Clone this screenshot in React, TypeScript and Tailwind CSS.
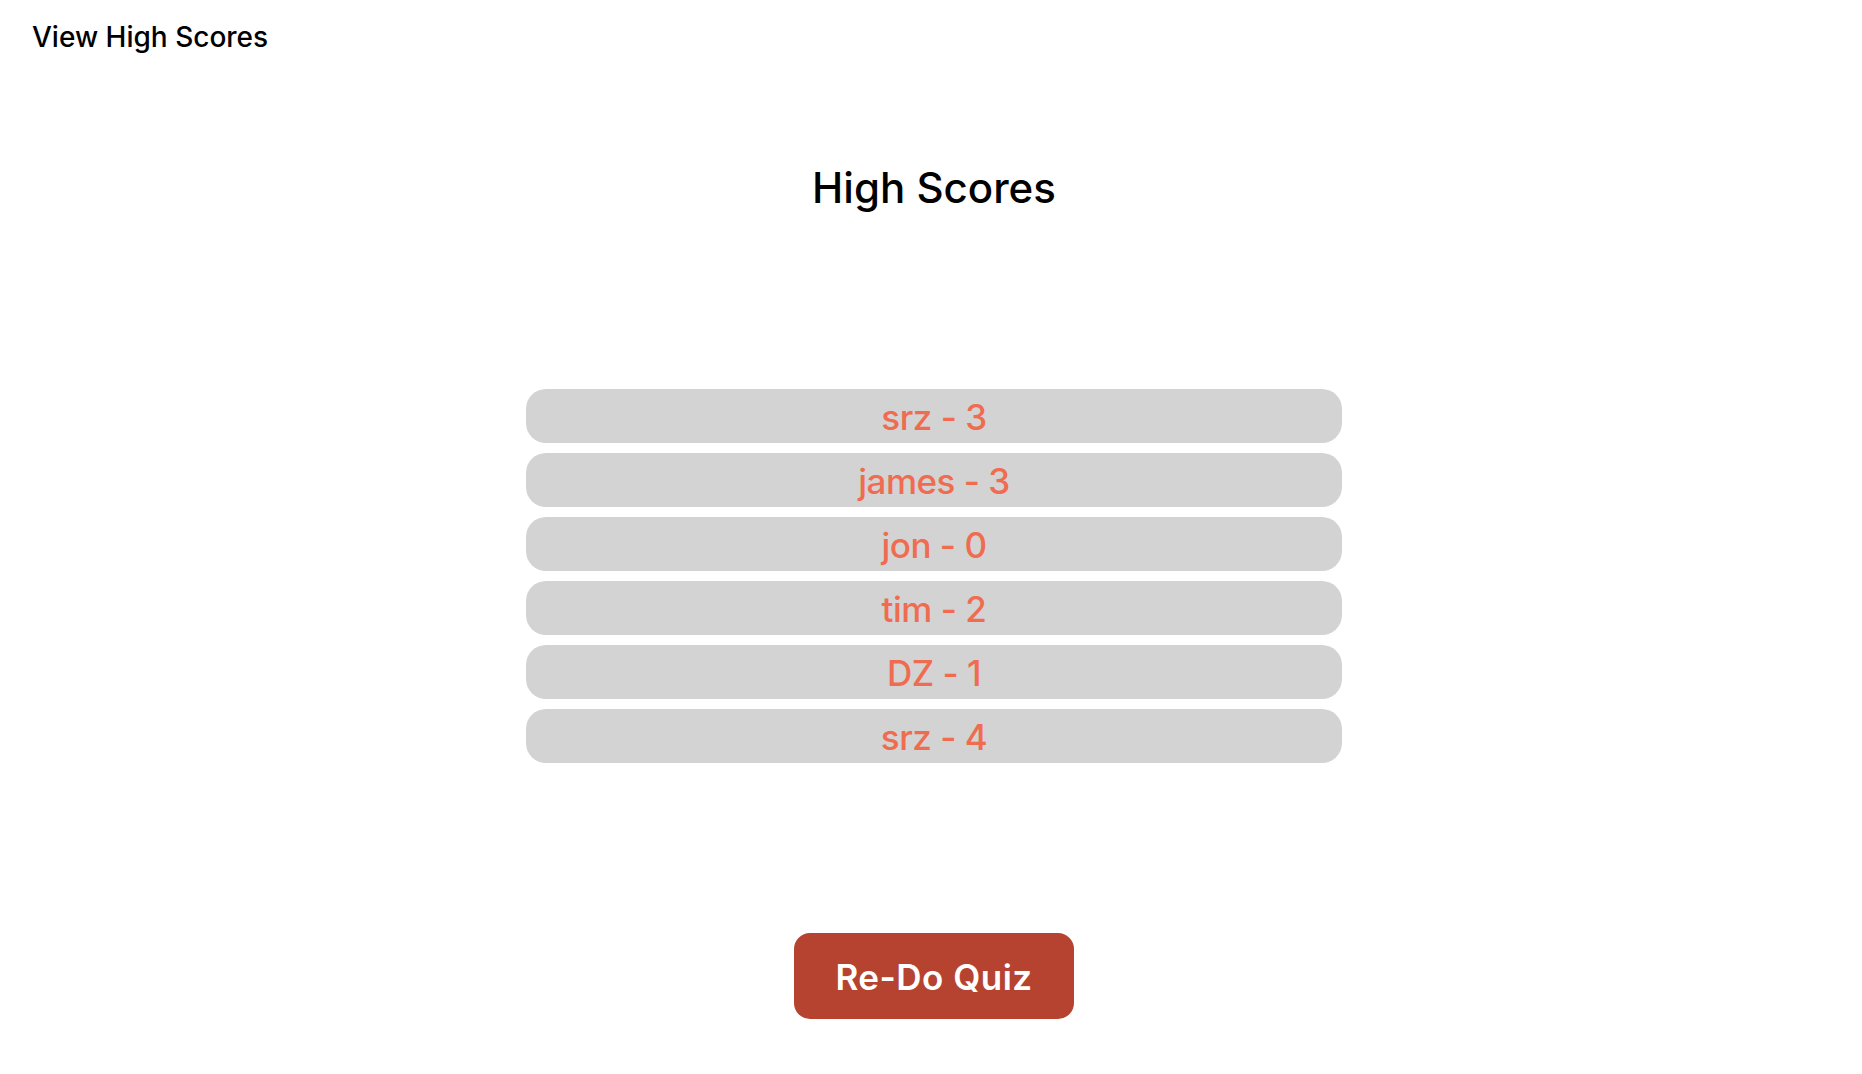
import { useState } from "react";

type Score = { initials: string; score: number };

const scores: Score[] = [
    { initials: "srz", score: 3 },
    { initials: "james", score: 3 },
    { initials: "jon", score: 0 },
    { initials: "tim", score: 2 },
    { initials: "DZ", score: 1 },
    { initials: "srz", score: 4 },
];

export default function App() {
    const [list] = useState<Score[]>(scores);

    return (
        <div className="min-h-screen bg-white font-['Inter',sans-serif] text-black">
            {/* Top nav link */}
            <header className="px-8 pt-5">
                <a href="#" className="text-[28px] leading-[34px] font-medium">
                    View High Scores
                </a>
            </header>

            <main className="flex flex-col items-center pl-[6px]">
                <h1 className="mt-[108px] text-[42px] leading-[52px] font-medium">High Scores</h1>

                {/* Saved scores */}
                <ul className="mt-[175px] flex w-[816px] flex-col gap-[10px]">
                    {list.map((s, i) => (
                        <li
                            key={i}
                            className="flex h-[54px] items-center justify-center rounded-[20px] bg-[#d3d3d3] pt-[2px] text-[35px] font-medium tracking-[-0.5px] text-[#ef6c50]"
                        >
                            {s.initials} - {s.score}
                        </li>
                    ))}
                </ul>

                <button className="mt-[170px] h-[86px] w-[280px] rounded-2xl bg-[#b5432f] pt-[3px] text-[35px] font-semibold tracking-[0.5px] text-white">
                    Re-Do Quiz
                </button>
            </main>
        </div>
    );
}
